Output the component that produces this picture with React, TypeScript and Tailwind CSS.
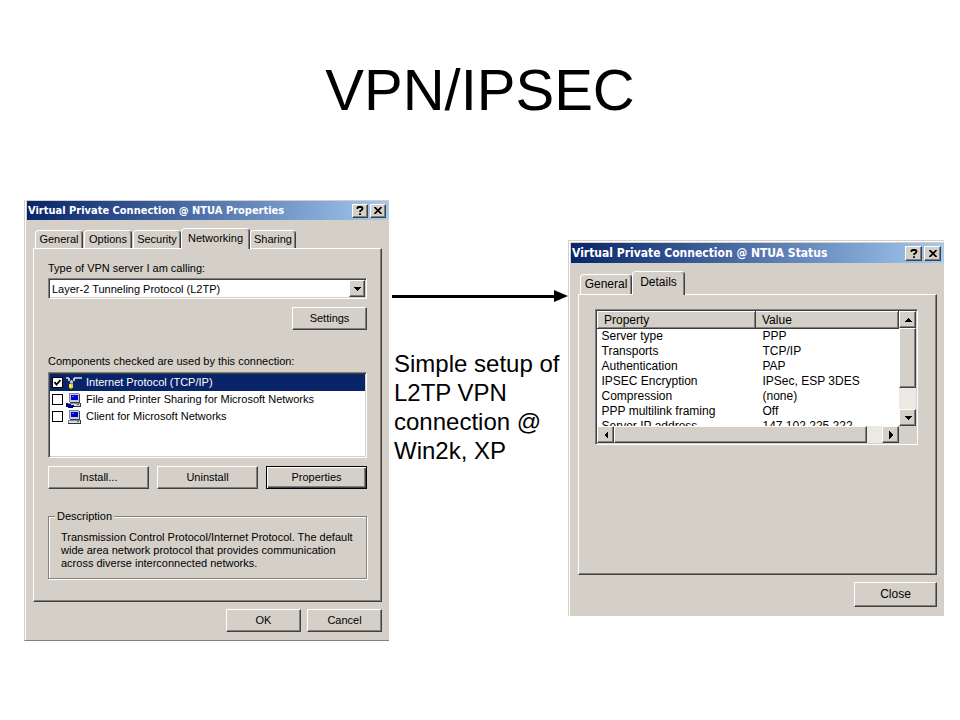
import React from 'react';
import clsx from 'clsx';

const raised =
  'border border-t-white border-l-white border-r-[#404040] border-b-[#404040] bg-[#d4d0c8] shadow-[inset_-1px_-1px_0_#808080]';
const raisedDefault =
  'border border-black bg-[#d4d0c8] shadow-[inset_1px_1px_0_#fff,inset_-1px_-1px_0_#404040,inset_-2px_-2px_0_#808080]';
const sunken =
  'border border-t-[#808080] border-l-[#808080] border-r-white border-b-white shadow-[inset_1px_1px_0_#404040,inset_-1px_-1px_0_#d4d0c8]';

const Arrow: React.FC<{ points: string }> = ({ points }) => (
  <svg viewBox="0 0 8 8" className="w-2 h-2" shapeRendering="crispEdges" aria-hidden="true">
    <polygon points={points} fill="#000" />
  </svg>
);

const arrows = {
  up: '0,6 4,2 8,6',
  down: '0,2 8,2 4,6',
  left: '6,0 2,4 6,8',
  right: '2,0 6,4 2,8'
};

const ScrollButton: React.FC<{ dir: keyof typeof arrows }> = ({ dir }) => (
  <button aria-label={`Scroll ${dir}`} className={clsx(raised, 'w-[17px] h-[17px] shrink-0 flex items-center justify-center')}>
    <Arrow points={arrows[dir]} />
  </button>
);

const PushButton: React.FC<{ label: string; className?: string; isDefault?: boolean }> = ({ label, className, isDefault }) => (
  <button className={clsx(isDefault ? raisedDefault : raised, 'flex items-center justify-center', className)}>
    {label}
  </button>
);

const TitleBar: React.FC<{ title: string; className: string; buttonClass: string }> = ({ title, className, buttonClass }) => (
  <div className={clsx('flex items-center justify-between pl-px pr-[3px] bg-linear-to-r from-[#0a246a] to-[#a6caf0]', className)}>
    <h2 className="font-bold text-white whitespace-nowrap font-['DejaVu_Sans_Condensed','DejaVu_Sans',sans-serif]">{title}</h2>
    <div className="flex gap-0.5">
      <button aria-label="Help" className={clsx(raised, 'flex items-center justify-center', buttonClass)}>
        <svg viewBox="0 0 8 9" className="w-2 h-[9px]" aria-hidden="true">
          <path d="M1.5 3V1.8Q1.8 1 3 1H5Q6.5 1 6.5 2.5Q6.5 3.5 5.2 4.2Q4 4.8 4 6M4 7.2V9" fill="none" stroke="#000" strokeWidth="1.8" />
        </svg>
      </button>
      <button aria-label="Close window" className={clsx(raised, 'flex items-center justify-center', buttonClass)}>
        <svg viewBox="0 0 8 7" className="w-2 h-[7px]" aria-hidden="true">
          <path d="M0.5 0L7.5 7M7.5 0L0.5 7" stroke="#000" strokeWidth="1.7" />
        </svg>
      </button>
    </div>
  </div>
);

const Tab: React.FC<{ label: string; selected?: boolean; className?: string }> = ({ label, selected, className }) => (
  <button
    role="tab"
    aria-selected={!!selected}
    className={clsx(
      'rounded-t-sm border border-b-0 border-t-white border-l-white border-r-[#404040] bg-[#d4d0c8] shadow-[inset_-1px_0_0_#808080]',
      selected && 'relative z-10 -mb-px',
      className
    )}
  >
    {label}
  </button>
);

const Computer: React.FC<{ shared?: boolean }> = ({ shared }) => (
  <svg viewBox="0 0 16 16" className="w-4 h-4 shrink-0" shapeRendering="crispEdges" aria-hidden="true">
    <path d="M3 1h10v9H3z" fill="#c8ccd8" />
    <path d="M13 2h1v9H4v-1h9z" fill="#404050" />
    <path d="M3 1h10v1H4v8H3z" fill="#8088a0" />
    <path d="M5 3h7v5H5z" fill="#0000d8" />
    <path d="M6 4h2v1H6z" fill="#5070ff" />
    <path d="M2 11h12v3H2z" fill="#d8dce4" />
    <path d="M2 11h12v1H3v2H2z" fill="#8088a0" />
    <path d="M14 11h1v4H2v-1h12z" fill="#303040" />
    <path d="M11 12h2v1h-2z" fill="#308030" />
    {shared && <path d="M0 11h2v1h3v1h3v2H7v1H2v-1H0z" fill="#000080" />}
  </svg>
);

const Protocol: React.FC = () => (
  <svg viewBox="0 0 16 16" className="w-4 h-4 shrink-0" shapeRendering="crispEdges" aria-hidden="true">
    <path d="M0 2h3v1h1v2H2V4H0zM7 3h1V2h8v2H9v1H7z" fill="#b0b0b0" />
    <path d="M2 3h2v2h3V3h2v3H7v2H4V6H2z" fill="#c8c8c8" />
    <path d="M4 5h1v1H4zM6 5h1v1H6z" fill="#404040" />
    <path d="M4 8h3v1H4z" fill="#808080" />
    <path d="M3 9h4v4H3z" fill="#e8d820" />
    <path d="M4 10h1v2H4z" fill="#fff" />
    <path d="M4 13h2v1H4z" fill="#a09000" />
  </svg>
);

const components = [
  { label: 'Internet Protocol (TCP/IP)', icon: <Protocol />, checked: true },
  { label: 'File and Printer Sharing for Microsoft Networks', icon: <Computer shared />, checked: false },
  { label: 'Client for Microsoft Networks', icon: <Computer />, checked: false }
];

const details = [
  ['Server type', 'PPP'],
  ['Transports', 'TCP/IP'],
  ['Authentication', 'PAP'],
  ['IPSEC Encryption', 'IPSec, ESP 3DES'],
  ['Compression', '(none)'],
  ['PPP multilink framing', 'Off'],
  ['Server IP address', '147.102.225.222']
];

const PropertiesDialog: React.FC = () => (
  <section className="bg-[#d4d0c8] border-l border-b border-l-[#d4d0c8] border-b-[#808080] shadow-[inset_1px_0_0_#fff] pt-px pl-0.5 pb-2 text-[11px] leading-[13px]">
    <TitleBar title="Virtual Private Connection @ NTUA Properties" className="h-[19px] text-[11px]" buttonClass="w-4 h-3.5" />

    <div className="pl-1.5 pr-[7px]">
      <div role="tablist" className="flex items-end h-7 pl-0.5">
        <Tab label="General" className="w-12 h-[18px] mr-px" />
        <Tab label="Options" className="w-12 h-[18px] mr-px" />
        <Tab label="Security" className="w-12 h-[18px]" />
        <Tab label="Networking" selected className="w-[69px] h-[21px] pb-0.5" />
        <Tab label="Sharing" className="w-[46px] h-[18px]" />
      </div>

      <div className={clsx(raised, 'px-3.5 pt-[13px] pb-[22px]')}>
        <label htmlFor="server-type" className="block">Type of VPN server I am calling:</label>
        <div className={clsx(sunken, 'relative mt-[3px] h-[21px] bg-white')}>
          <select id="server-type" className="appearance-none w-full h-full pl-[3px] pt-px outline-none">
            <option>Layer-2 Tunneling Protocol (L2TP)</option>
          </select>
          <span className={clsx(raised, 'absolute right-px top-px w-4 h-[17px] flex items-center justify-center pointer-events-none')}>
            <Arrow points={arrows.down} />
          </span>
        </div>
        <div className="flex justify-end mt-2">
          <PushButton label="Settings" className="w-[75px] h-[23px]" />
        </div>

        <p className="mt-[25px]">Components checked are used by this connection:</p>
        <ul className={clsx(sunken, 'mt-1 h-[86px] p-px bg-white')}>
          {components.map((item) => (
            <li key={item.label} className={clsx(item.checked && 'bg-[#0a246a] text-white')}>
              <label className="flex items-center h-[17px] pl-0.5">
                <span className="relative flex w-[11px] h-[11px] mr-[3px]">
                  <input type="checkbox" defaultChecked={item.checked} className="peer appearance-none w-full h-full border border-black bg-white" />
                  <svg viewBox="0 0 11 11" className="absolute inset-0 hidden peer-checked:block" aria-hidden="true">
                    <path d="M2.5 5L4.5 7.5L8.5 3" fill="none" stroke="#000" strokeWidth="1.8" />
                  </svg>
                </span>
                {item.icon}
                <span className="ml-1">{item.label}</span>
              </label>
            </li>
          ))}
        </ul>

        <div className="grid grid-cols-3 gap-2 mt-2">
          <PushButton label="Install..." className="h-[23px]" />
          <PushButton label="Uninstall" className="h-[23px]" />
          <PushButton label="Properties" isDefault className="h-[23px]" />
        </div>

        <fieldset className="mt-[21px] h-[69px] pl-3 pr-2 border border-[#808080] shadow-[1px_1px_0_#fff,inset_1px_1px_0_#fff]">
          <legend className="-ml-1.5 px-0.5 bg-[#d4d0c8]">Description</legend>
          <p className="mt-2">
            Transmission Control Protocol/Internet Protocol. The default wide area network protocol that provides communication across diverse interconnected networks.
          </p>
        </fieldset>
      </div>

      <div className="flex justify-end gap-1.5 mt-[7px]">
        <PushButton label="OK" className="w-[75px] h-[23px]" />
        <PushButton label="Cancel" className="w-[75px] h-[23px]" />
      </div>
    </div>
  </section>
);

const StatusDialog: React.FC = () => (
  <section className="mt-10 bg-[#d4d0c8] border-l border-t border-[#d4d0c8] shadow-[inset_1px_1px_0_#fff] pt-0.5 pl-0.5 pb-[9px] text-xs leading-[15px]">
    <TitleBar title="Virtual Private Connection @ NTUA Status" className="h-5 text-xs" buttonClass="w-[17px] h-[15px]" />

    <div className="px-[7px]">
      <div role="tablist" className="flex items-end h-[31px] pl-0.5">
        <Tab label="General" className="w-[52px] h-5" />
        <Tab label="Details" selected className="w-[53px] h-6 pb-0.5" />
      </div>

      <div className={clsx(raised, 'h-[281px] pl-4 pr-[18px] pt-3.5')}>
        <div className={clsx(sunken, 'h-[136px] p-px flex flex-col')}>
          <div className="flex flex-1 min-h-0">
            <div className="flex-1 overflow-hidden bg-white">
              <table className="w-full table-fixed border-collapse text-left">
                <thead>
                  <tr className="h-[17px]">
                    <th className={clsx(raised, 'w-[158px] p-0 pl-1.5 font-normal')}>Property</th>
                    <th className={clsx(raised, 'p-0 pl-1.5 font-normal')}>Value</th>
                  </tr>
                </thead>
                <tbody>
                  {details.map(([property, value]) => (
                    <tr key={property}>
                      <td className="p-0 pl-1">{property}</td>
                      <td className="p-0 pl-[7px]">{value}</td>
                    </tr>
                  ))}
                </tbody>
              </table>
            </div>
            <div className="flex flex-col bg-[#ebe9e4]">
              <ScrollButton dir="up" />
              <div className={clsx(raised, 'h-[60px]')}></div>
              <div className="flex-1"></div>
              <ScrollButton dir="down" />
            </div>
          </div>
          <div className="flex pr-[17px] bg-[#d4d0c8]">
            <ScrollButton dir="left" />
            <div className="flex flex-1 bg-[#ebe9e4]">
              <div className={clsx(raised, 'flex-1 mr-[15px]')}></div>
            </div>
            <ScrollButton dir="right" />
          </div>
        </div>
      </div>

      <div className="flex justify-end mt-[7px]">
        <PushButton label="Close" className="w-[83px] h-[25px]" />
      </div>
    </div>
  </section>
);

const App: React.FC = () => {
  return (
    <main className="min-h-screen bg-white text-black pl-6 pr-4 pt-12 pb-10 font-['Liberation_Sans',Arial,sans-serif]">
      <h1 className="h-[152px] pr-2 text-center text-[58px] leading-[84px]">VPN/IPSEC</h1>

      <div className="grid grid-cols-[365fr_179fr_376fr] items-start">
        <PropertiesDialog />

        <div className="pt-[90px]">
          {/* Arrow from one dialog to the other */}
          <div className="flex items-center pl-[3px]">
            <div className="flex-1 h-[3px] bg-black"></div>
            <svg viewBox="0 0 14 12" className="w-3.5 h-3" aria-hidden="true">
              <polygon points="0,0 14,6 0,12" fill="#000" />
            </svg>
          </div>
          <p className="mt-[47px] pl-[5px] text-2xl leading-[29px]">Simple setup of L2TP VPN connection @ Win2k, XP</p>
        </div>

        <StatusDialog />
      </div>
    </main>
  );
};

export default App;
